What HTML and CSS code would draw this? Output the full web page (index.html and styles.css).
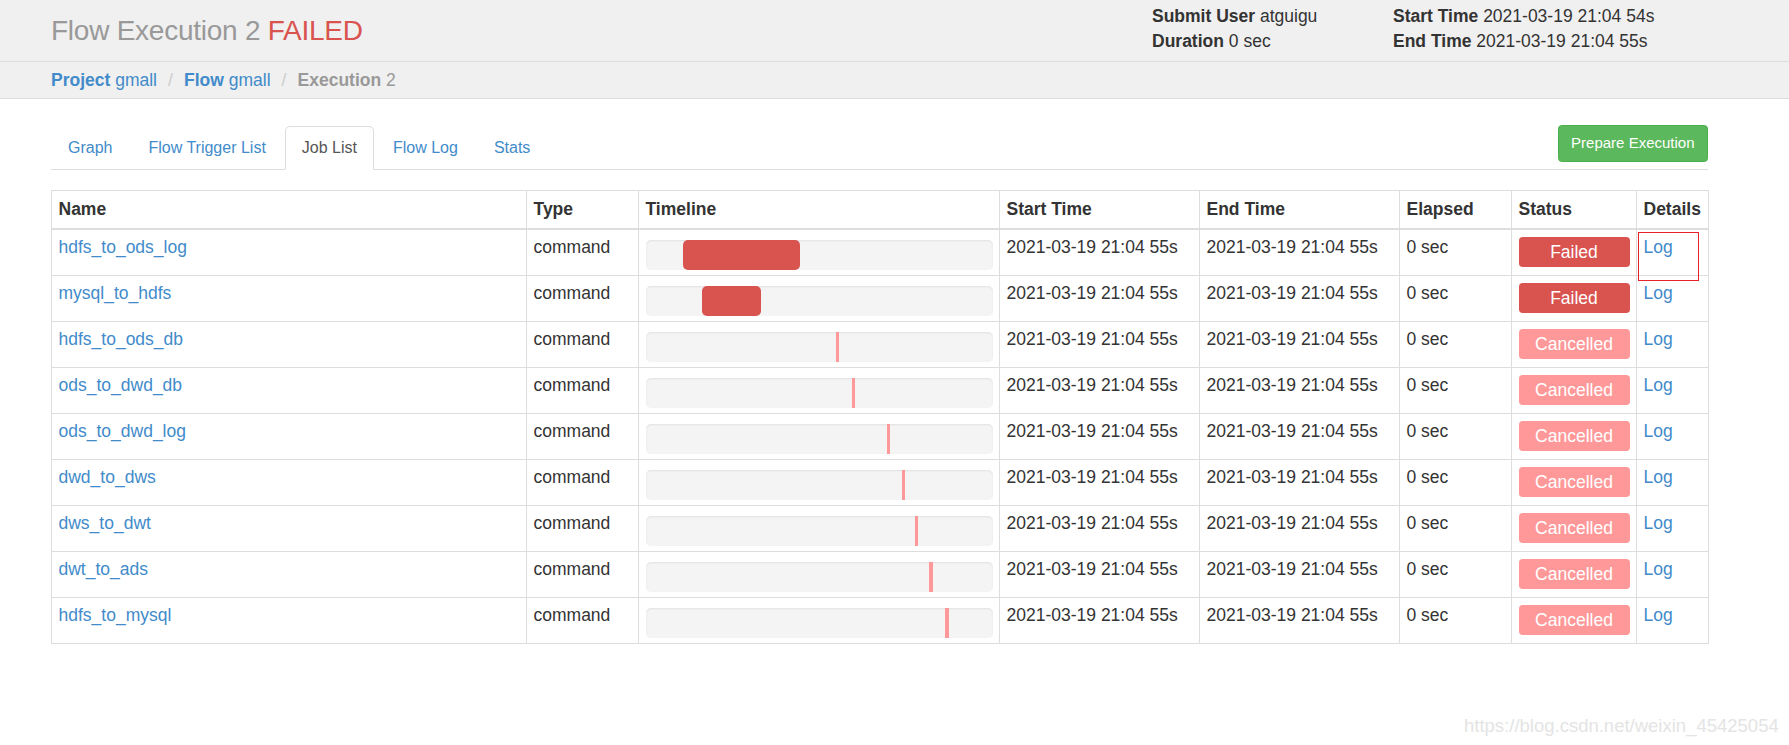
FILE: index.html
```html
<!DOCTYPE html>
<html lang="en">
<head>
<meta charset="utf-8">
<title>Flow Execution 2</title>
<link rel="stylesheet" href="styles.css">
</head>
<body>
<header class="page-header">
  <div class="container header-inner">
    <h1 class="title">Flow Execution 2 <span class="failed">FAILED</span></h1>
    <div class="exec-info">
      <div><strong>Submit User</strong> atguigu</div>
      <div><strong>Start Time</strong> 2021-03-19 21:04 54s</div>
      <div><strong>Duration</strong> 0 sec</div>
      <div><strong>End Time</strong> 2021-03-19 21:04 55s</div>
    </div>
  </div>
</header>
<nav class="breadcrumb-bar">
  <div class="container">
    <ol class="breadcrumb">
      <li><a href="#"><strong>Project</strong> gmall</a></li>
      <li><a href="#"><strong>Flow</strong> gmall</a></li>
      <li class="active"><strong>Execution</strong> 2</li>
    </ol>
  </div>
</nav>
<main class="container content">
  <div class="tabs-row">
    <ul class="tabs">
      <li><a class="tab" href="#">Graph</a></li>
      <li><a class="tab" href="#">Flow Trigger List</a></li>
      <li><a class="tab active" href="#">Job List</a></li>
      <li><a class="tab" href="#">Flow Log</a></li>
      <li><a class="tab" href="#">Stats</a></li>
    </ul>
    <button class="btn-success" type="button">Prepare Execution</button>
  </div>
  <table class="jobs">
    <colgroup>
      <col class="c-name"><col class="c-type"><col class="c-timeline"><col class="c-time"><col class="c-time"><col class="c-elapsed"><col class="c-status"><col class="c-details">
    </colgroup>
    <thead>
      <tr><th>Name</th><th>Type</th><th>Timeline</th><th>Start Time</th><th>End Time</th><th>Elapsed</th><th>Status</th><th>Details</th></tr>
    </thead>
    <tbody>
      <tr><td><a href="#">hdfs_to_ods_log</a></td><td>command</td><td><div class="progress"><div class="bar bar-failed" style="left:10.7%;width:33.7%"></div></div></td><td>2021-03-19 21:04 55s</td><td>2021-03-19 21:04 55s</td><td>0 sec</td><td><div class="status status-failed">Failed</div></td><td><a href="#">Log</a></td></tr>
      <tr><td><a href="#">mysql_to_hdfs</a></td><td>command</td><td><div class="progress"><div class="bar bar-failed" style="left:16.4%;width:17%"></div></div></td><td>2021-03-19 21:04 55s</td><td>2021-03-19 21:04 55s</td><td>0 sec</td><td><div class="status status-failed">Failed</div></td><td><a href="#">Log</a></td></tr>
      <tr><td><a href="#">hdfs_to_ods_db</a></td><td>command</td><td><div class="progress"><div class="bar bar-cancelled" style="left:54.9%"></div></div></td><td>2021-03-19 21:04 55s</td><td>2021-03-19 21:04 55s</td><td>0 sec</td><td><div class="status status-cancelled">Cancelled</div></td><td><a href="#">Log</a></td></tr>
      <tr><td><a href="#">ods_to_dwd_db</a></td><td>command</td><td><div class="progress"><div class="bar bar-cancelled" style="left:59.5%"></div></div></td><td>2021-03-19 21:04 55s</td><td>2021-03-19 21:04 55s</td><td>0 sec</td><td><div class="status status-cancelled">Cancelled</div></td><td><a href="#">Log</a></td></tr>
      <tr><td><a href="#">ods_to_dwd_log</a></td><td>command</td><td><div class="progress"><div class="bar bar-cancelled" style="left:69.5%"></div></div></td><td>2021-03-19 21:04 55s</td><td>2021-03-19 21:04 55s</td><td>0 sec</td><td><div class="status status-cancelled">Cancelled</div></td><td><a href="#">Log</a></td></tr>
      <tr><td><a href="#">dwd_to_dws</a></td><td>command</td><td><div class="progress"><div class="bar bar-cancelled" style="left:73.8%"></div></div></td><td>2021-03-19 21:04 55s</td><td>2021-03-19 21:04 55s</td><td>0 sec</td><td><div class="status status-cancelled">Cancelled</div></td><td><a href="#">Log</a></td></tr>
      <tr><td><a href="#">dws_to_dwt</a></td><td>command</td><td><div class="progress"><div class="bar bar-cancelled" style="left:77.6%"></div></div></td><td>2021-03-19 21:04 55s</td><td>2021-03-19 21:04 55s</td><td>0 sec</td><td><div class="status status-cancelled">Cancelled</div></td><td><a href="#">Log</a></td></tr>
      <tr><td><a href="#">dwt_to_ads</a></td><td>command</td><td><div class="progress"><div class="bar bar-cancelled" style="left:81.8%"></div></div></td><td>2021-03-19 21:04 55s</td><td>2021-03-19 21:04 55s</td><td>0 sec</td><td><div class="status status-cancelled">Cancelled</div></td><td><a href="#">Log</a></td></tr>
      <tr><td><a href="#">hdfs_to_mysql</a></td><td>command</td><td><div class="progress"><div class="bar bar-cancelled" style="left:86.4%"></div></div></td><td>2021-03-19 21:04 55s</td><td>2021-03-19 21:04 55s</td><td>0 sec</td><td><div class="status status-cancelled">Cancelled</div></td><td><a href="#">Log</a></td></tr>
    </tbody>
  </table>
</main>
<div class="annotation"></div>
<div class="watermark">https://blog.csdn.net/weixin_45425054</div>
</body>
</html>
```

FILE: styles.css
```css
* { box-sizing: border-box; }
html, body { margin: 0; padding: 0; }
body {
  font-family: "Liberation Sans", Arial, sans-serif;
  font-size: 17.5px;
  line-height: 25px;
  color: #333;
  background: #fff;
  position: relative;
  min-height: 745px;
}
a { color: #428bca; text-decoration: none; }

.container { margin-left: 51px; width: 1657px; }

/* header */
.page-header {
  background: #f0f0f0;
  border-bottom: 1px solid #ddd;
  height: 62px;
}
.header-inner { display: flex; justify-content: space-between; align-items: flex-start; }
.title {
  margin: 0;
  font-size: 28px;
  font-weight: normal;
  line-height: 61px;
  color: #999;
  letter-spacing: -0.25px;
}
.title .failed { color: #d9534f; }
.exec-info {
  display: grid;
  grid-template-columns: 241px 315px;
  align-content: start;
  padding-top: 4px;
  line-height: 25px;
}
.exec-info strong { color: #333; }

/* breadcrumb */
.breadcrumb-bar {
  background: #f0f0f0;
  border-bottom: 1px solid #ddd;
  padding: 6px 0 5px;
}
.breadcrumb { list-style: none; margin: 0; padding: 0; display: flex; }
.breadcrumb li + li::before {
  content: "/\00a0";
  padding: 0 6.25px 0 11px;
  color: #ccc;
}
.breadcrumb .active { color: #999; }

/* tabs */
.content { padding-top: 26.5px; }
.tabs-row {
  display: flex;
  align-items: flex-start;
  border-bottom: 1px solid #ddd;
}
.tabs { list-style: none; margin: 0; padding: 0; display: flex; }
.tab {
  display: block;
  font-size: 16px;
  line-height: 21.4px;
  padding: 10.5px 16px;
  border: 1px solid transparent;
  border-radius: 5px 5px 0 0;
  margin-right: 2px;
  margin-bottom: -1px;
}
.tab.active {
  color: #555;
  background: #fff;
  border-color: #ddd #ddd transparent;
}
.btn-success {
  margin-left: auto;
  margin-top: -0.5px;
  font-family: inherit;
  font-size: 15px;
  line-height: 22.5px;
  padding: 6px 12.5px;
  color: #fff;
  background: #5cb85c;
  border: 1px solid #4cae4c;
  border-radius: 3.75px;
}

/* table */
.jobs {
  margin-top: 20px;
  width: 1657px;
  table-layout: fixed;
  border-collapse: collapse;
  border: 1px solid #ddd;
}
.c-name { width: 475px; }
.c-type { width: 112px; }
.c-timeline { width: 361px; }
.c-time { width: 200px; }
.c-elapsed { width: 112px; }
.c-status { width: 125px; }
.c-details { width: 72px; }
.jobs th, .jobs td {
  border: 1px solid #ddd;
  text-align: left;
  vertical-align: top;
  white-space: nowrap;
}
.jobs th {
  padding: 6px 6.5px 6px;
  border-bottom: 2.5px solid #ddd;
  font-weight: bold;
}
.jobs td {
  padding: 5px 6.5px;
  height: 45px;
}
.progress {
  position: relative;
  margin-top: 5px;
  height: 30px;
  background: #f4f4f4;
  border-radius: 5px;
  box-shadow: inset 0 1px 2px rgba(0, 0, 0, 0.08);
  overflow: hidden;
}
.bar { position: absolute; top: 0; bottom: 0; }
.bar-failed { background: #d9534f; border-radius: 5px; }
.bar-cancelled { background: #ff9999; width: 1%; }
.status {
  margin-top: 2.5px;
  height: 30px;
  line-height: 30px;
  text-align: center;
  color: #fff;
  border-radius: 3.75px;
}
.status-failed { background: #d9534f; }
.status-cancelled { background: #ff9999; }

/* overlays */
.annotation {
  position: absolute;
  left: 1638px;
  top: 232px;
  width: 61px;
  height: 49px;
  border: 1px solid #e8222a;
}
.watermark {
  position: absolute;
  left: 1464px;
  top: 715px;
  font-size: 18.5px;
  line-height: 22px;
  color: #e4e4e4;
}
```
